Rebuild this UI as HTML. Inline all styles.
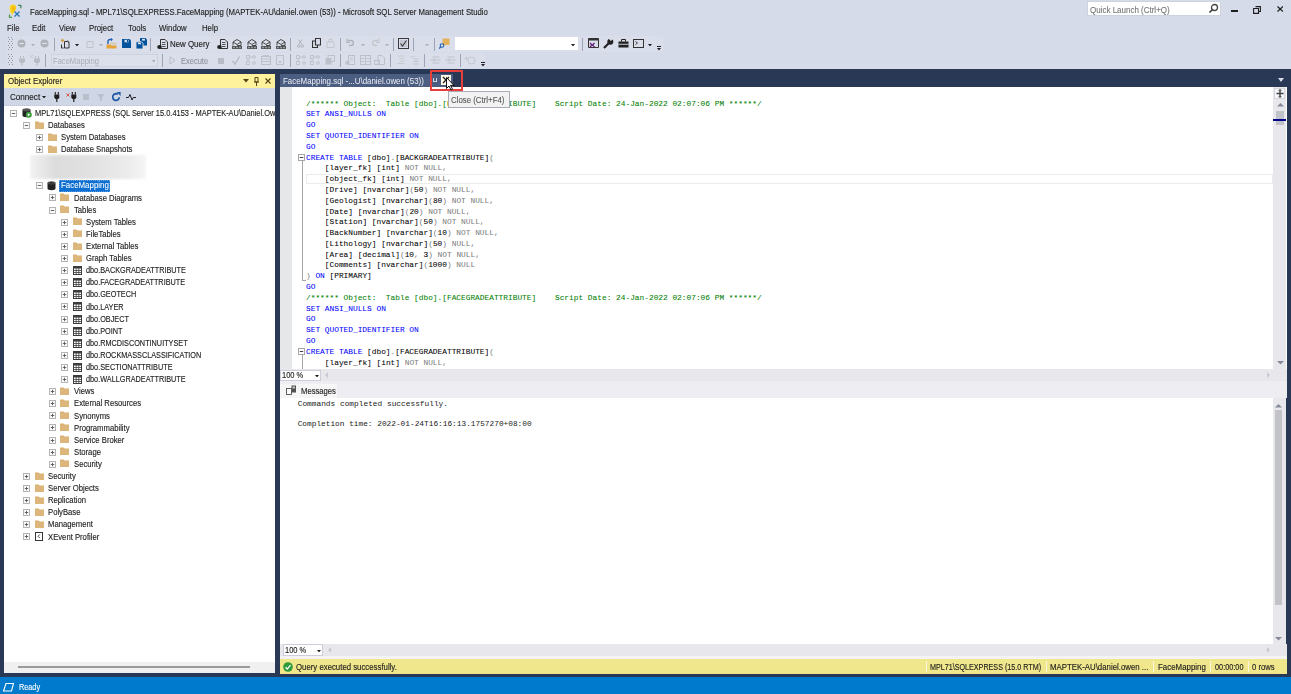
<!DOCTYPE html><html><head><meta charset='utf-8'><style>
*{margin:0;padding:0;box-sizing:border-box}
html,body{width:1291px;height:694px;overflow:hidden;background:#d6dbe9;font-family:"Liberation Sans",sans-serif;color:#1e1e1e}
.a{position:absolute}
.t{position:absolute;white-space:pre;line-height:1;transform-origin:0 0}
.mono{font-family:"Liberation Mono",monospace}
</style></head><body><svg class="a" style="left:8px;top:3px" width="15" height="16" viewBox="0 0 15 16"><defs><radialGradient id="yg" cx="0.6" cy="0.4" r="0.6"><stop offset="0" stop-color="#f5b400"/><stop offset="1" stop-color="#f8e040"/></radialGradient></defs><path d="M1.5 4.5c0-2 1.5-3 3.5-3s3.5 1 3.2 3.5c-0.3 2.5-2.5 5-4.2 7-1.5-2-2.5-4.5-2.5-7.5z" fill="url(#yg)"/><path d="M10 2.3h2.8v3" stroke="#3f8a5a" stroke-width="1.3" fill="none"/><path d="M1.5 11.5v2.8h2.5" stroke="#4d9a4d" stroke-width="1.3" fill="none"/><path d="M6.5 8.5l5 5M11.5 8.5l-5 5" stroke="#2d78b8" stroke-width="1.4"/></svg>
<div class="t" style="left:30.00px;top:9.06px;font-size:8.2px;color:#1e1e1e;transform:scaleX(0.9463);-webkit-text-stroke:0.13px #1e1e1e;">FaceMapping.sql - MPL71\SQLEXPRESS.FaceMapping (MAPTEK-AU\daniel.owen (53)) - Microsoft SQL Server Management Studio</div>
<div class="a" style="left:1087px;top:1px;width:134px;height:15px;background:#fff;border:1px solid #cdd2df"></div>
<div class="t" style="left:1090.00px;top:6.66px;font-size:8.2px;color:#767676;transform:scaleX(0.9756);-webkit-text-stroke:0.1px #767676;">Quick Launch (Ctrl+Q)</div>
<svg class="a" style="left:1208px;top:3px" width="11" height="11" viewBox="0 0 11 11"><circle cx="6.5" cy="4.5" r="3" stroke="#424242" stroke-width="1.3" fill="none"/><path d="M4.5 6.5L1.5 9.5" stroke="#424242" stroke-width="1.7"/></svg>
<div class="a" style="left:1231px;top:9.5px;width:7px;height:2px;background:#1e1e1e"></div>
<svg class="a" style="left:1253px;top:5.5px" width="8" height="8" viewBox="0 0 8 8"><path d="M2.5 0.6h4.9v4.9h-1.5" stroke="#1e1e1e" stroke-width="1.1" fill="none"/><path d="M0.6 2.5h4.9v4.9h-4.9z" stroke="#1e1e1e" stroke-width="1.1" fill="none"/></svg>
<svg class="a" style="left:1276.5px;top:6.3px" width="6.5" height="6" viewBox="0 0 6.5 6"><path d="M0.5 0.5l5.5 5M6 0.5l-5.5 5" stroke="#1e1e1e" stroke-width="1.2"/></svg>
<div class="t" style="left:7.00px;top:25.06px;font-size:8.2px;color:#1e1e1e;transform:scaleX(0.9512);-webkit-text-stroke:0.13px #1e1e1e;">File</div>
<div class="t" style="left:32.00px;top:25.06px;font-size:8.2px;color:#1e1e1e;transform:scaleX(0.9512);-webkit-text-stroke:0.13px #1e1e1e;">Edit</div>
<div class="t" style="left:59.00px;top:25.06px;font-size:8.2px;color:#1e1e1e;transform:scaleX(0.9512);-webkit-text-stroke:0.13px #1e1e1e;">View</div>
<div class="t" style="left:89.00px;top:25.06px;font-size:8.2px;color:#1e1e1e;transform:scaleX(0.9512);-webkit-text-stroke:0.13px #1e1e1e;">Project</div>
<div class="t" style="left:128.00px;top:25.06px;font-size:8.2px;color:#1e1e1e;transform:scaleX(0.9512);-webkit-text-stroke:0.13px #1e1e1e;">Tools</div>
<div class="t" style="left:159.00px;top:25.06px;font-size:8.2px;color:#1e1e1e;transform:scaleX(0.9512);-webkit-text-stroke:0.13px #1e1e1e;">Window</div>
<div class="t" style="left:202.00px;top:25.06px;font-size:8.2px;color:#1e1e1e;transform:scaleX(0.9512);-webkit-text-stroke:0.13px #1e1e1e;">Help</div>
<div class="a" style="left:7px;top:36px;width:656px;height:16px;background:#d9deea"></div>
<div class="a" style="left:7px;top:53px;width:478px;height:15px;background:#d9deea"></div>
<svg class="a" style="left:8px;top:37px" width="5" height="14" viewBox="0 0 5 14"><rect x="0" y="0" width="1" height="1" fill="#8e96a8"/><rect x="3" y="0" width="1" height="1" fill="#8e96a8"/><rect x="1" y="2" width="1" height="1" fill="#8e96a8"/><rect x="4" y="2" width="1" height="1" fill="#8e96a8"/><rect x="0" y="4" width="1" height="1" fill="#8e96a8"/><rect x="3" y="4" width="1" height="1" fill="#8e96a8"/><rect x="1" y="6" width="1" height="1" fill="#8e96a8"/><rect x="4" y="6" width="1" height="1" fill="#8e96a8"/><rect x="0" y="8" width="1" height="1" fill="#8e96a8"/><rect x="3" y="8" width="1" height="1" fill="#8e96a8"/><rect x="1" y="10" width="1" height="1" fill="#8e96a8"/><rect x="4" y="10" width="1" height="1" fill="#8e96a8"/><rect x="0" y="12" width="1" height="1" fill="#8e96a8"/><rect x="3" y="12" width="1" height="1" fill="#8e96a8"/></svg>
<svg class="a" style="left:17px;top:39px" width="9" height="9" viewBox="0 0 9 9"><circle cx="4.5" cy="4.5" r="4" fill="#aeb2ba"/><path d="M2.3 4.5h4.4" stroke="#e6e8ee" stroke-width="1"/></svg>
<svg class="a" style="left:31px;top:43.5px" width="4" height="2.5" viewBox="0 0 4 2.5"><path d="M0 0h4l-2.0 2.5z" fill="#aeb2ba"/></svg>
<svg class="a" style="left:40px;top:39px" width="9" height="9" viewBox="0 0 9 9"><circle cx="4.5" cy="4.5" r="4" fill="#aeb2ba"/><path d="M2.3 4.5h4.4" stroke="#e6e8ee" stroke-width="1"/></svg>
<div class="a" style="left:54px;top:37.5px;width:1px;height:13px;background:#9ca4b6"></div>
<svg class="a" style="left:60px;top:38px" width="10" height="11" viewBox="0 0 10 11"><path d="M2.5 0.8v3.4M0.8 2.5h3.4" stroke="#c9a24a" stroke-width="1.3"/><path d="M4.5 3.5h3.2l1.3 1.3v5.2h-4.5z" stroke="#333" stroke-width="1" fill="none"/><path d="M7 2.5h0.8l1.7 1.7v0.8z" fill="#333"/><path d="M1.5 6.5v3.5h2" stroke="#333" stroke-width="1" fill="none"/></svg>
<svg class="a" style="left:75px;top:43.5px" width="4" height="2.5" viewBox="0 0 4 2.5"><path d="M0 0h4l-2.0 2.5z" fill="#1e1e1e"/></svg>
<svg class="a" style="left:86px;top:40px" width="8" height="8" viewBox="0 0 8 8"><path d="M1 1.5h6v6h-6z" stroke="#c0c3ca" stroke-width="1" fill="none"/></svg>
<svg class="a" style="left:99px;top:43.5px" width="4" height="2.5" viewBox="0 0 4 2.5"><path d="M0 0h4l-2.0 2.5z" fill="#aeb2ba"/></svg>
<svg class="a" style="left:106px;top:38px" width="11" height="11" viewBox="0 0 11 11"><path d="M0.5 6.5h4l1 1h5v3h-10z" fill="#e8a33a"/><path d="M4 6.5h6.5v-2h-6z" fill="#d4bf90" opacity="0.6"/><path d="M2 6v-2.5a2 2 0 0 1 2-2h1.5" stroke="#1f5fae" stroke-width="1.4" fill="none"/><path d="M5 0l2 1.5-2 1.8z" fill="#1f5fae"/></svg>
<svg class="a" style="left:122px;top:39px" width="9" height="9" viewBox="0 0 9 9"><path d="M0 0h7.5l1.5 1.5v7.5h-9z" fill="#00539c"/><rect x="2.5" y="0.8" width="4" height="2.5" fill="#d6dbe9"/><rect x="5" y="1" width="1" height="2" fill="#00539c"/></svg>
<svg class="a" style="left:136px;top:38px" width="11" height="11" viewBox="0 0 11 11"><path d="M4 0h5.5l1.5 1.5v6h-7z" fill="#00539c"/><rect x="6" y="0.8" width="3" height="1.8" fill="#d6dbe9"/><path d="M0 3.8h5.5l1.5 1.5v5.7h-7z" fill="#00539c" stroke="#d9deea" stroke-width="0.9"/><rect x="2" y="4.5" width="3" height="1.8" fill="#d6dbe9"/></svg>
<div class="a" style="left:150px;top:37.5px;width:1px;height:13px;background:#9ca4b6"></div>
<svg class="a" style="left:157px;top:38.5px" width="11" height="10" viewBox="0 0 11 10"><path d="M3.5 0.5h4.5l2.5 2.5v6.5h-7z" stroke="#333" stroke-width="1" fill="none"/><path d="M5 3.5h3.5M5 5.5h3.5M5 7.5h3.5" stroke="#333" stroke-width="0.8"/><ellipse cx="2.5" cy="8" rx="2.3" ry="1.9" fill="#222"/></svg>
<div class="t" style="left:169.50px;top:41.26px;font-size:8.2px;color:#1e1e1e;transform:scaleX(0.9634);-webkit-text-stroke:0.13px #1e1e1e;">New Query</div>
<svg class="a" style="left:217px;top:38.5px" width="11" height="10" viewBox="0 0 11 10"><path d="M3.5 0.5h4.5l2.5 2.5v6.5h-7z" stroke="#333" stroke-width="1" fill="none"/><path d="M5 3.5h3.5M5 5.5h3.5M5 7.5h3.5" stroke="#333" stroke-width="0.8"/><ellipse cx="2.5" cy="8" rx="2.3" ry="1.9" fill="#222"/></svg>
<svg class="a" style="left:232px;top:38.5px" width="10" height="10" viewBox="0 0 10 10"><path d="M1 3l4-2.5 4 2.5v3.5l-4 0" stroke="#3a3a3a" stroke-width="0.9" fill="none"/><path d="M1 3l4 2.5 4-2.5M1 3v3.5" stroke="#3a3a3a" stroke-width="0.9" fill="none"/><path d="M0.5 7.2v2.6M2 7.2v2.6M3.5 7.2v2.6M5 7.2v2.6M6.5 7.2v2.6M8 7.2v2.6M9.5 7.2v2.6" stroke="#444" stroke-width="0.9"/><path d="M0.5 7.5h9.5M0.5 9.5h9.5" stroke="#444" stroke-width="0.7"/></svg>
<svg class="a" style="left:247px;top:38.5px" width="10" height="10" viewBox="0 0 10 10"><path d="M1 3l4-2.5 4 2.5v3.5l-4 0" stroke="#3a3a3a" stroke-width="0.9" fill="none"/><path d="M1 3l4 2.5 4-2.5M1 3v3.5" stroke="#3a3a3a" stroke-width="0.9" fill="none"/><path d="M0.5 7.2v2.6M2 7.2v2.6M3.5 7.2v2.6M5 7.2v2.6M6.5 7.2v2.6M8 7.2v2.6M9.5 7.2v2.6" stroke="#444" stroke-width="0.9"/><path d="M0.5 7.5h9.5M0.5 9.5h9.5" stroke="#444" stroke-width="0.7"/></svg>
<svg class="a" style="left:261px;top:38.5px" width="10" height="10" viewBox="0 0 10 10"><path d="M1 3l4-2.5 4 2.5v3.5l-4 0" stroke="#3a3a3a" stroke-width="0.9" fill="none"/><path d="M1 3l4 2.5 4-2.5M1 3v3.5" stroke="#3a3a3a" stroke-width="0.9" fill="none"/><path d="M0.5 7.2v2.6M2 7.2v2.6M3.5 7.2v2.6M5 7.2v2.6M6.5 7.2v2.6M8 7.2v2.6M9.5 7.2v2.6" stroke="#444" stroke-width="0.9"/><path d="M0.5 7.5h9.5M0.5 9.5h9.5" stroke="#444" stroke-width="0.7"/></svg>
<svg class="a" style="left:276px;top:38.5px" width="10" height="10" viewBox="0 0 10 10"><path d="M1 3l4-2.5 4 2.5v3.5l-4 0" stroke="#3a3a3a" stroke-width="0.9" fill="none"/><path d="M1 3l4 2.5 4-2.5M1 3v3.5" stroke="#3a3a3a" stroke-width="0.9" fill="none"/><path d="M0.5 7.2v2.6M2 7.2v2.6M3.5 7.2v2.6M5 7.2v2.6M6.5 7.2v2.6M8 7.2v2.6M9.5 7.2v2.6" stroke="#444" stroke-width="0.9"/><path d="M0.5 7.5h9.5M0.5 9.5h9.5" stroke="#444" stroke-width="0.7"/></svg>
<div class="a" style="left:290px;top:37.5px;width:1px;height:13px;background:#9ca4b6"></div>
<svg class="a" style="left:297px;top:39px" width="7" height="9" viewBox="0 0 7 9"><path d="M1.5 0.5l3.5 5M5 0.5l-3.5 5" stroke="#aeb2ba" stroke-width="1"/><circle cx="1.8" cy="7" r="1.3" stroke="#aeb2ba" fill="none" stroke-width="0.9"/><circle cx="5.2" cy="7" r="1.3" stroke="#aeb2ba" fill="none" stroke-width="0.9"/></svg>
<svg class="a" style="left:312px;top:38px" width="9" height="10" viewBox="0 0 9 10"><path d="M3.5 0.5h5v6.5h-5z" stroke="#333" stroke-width="1.1" fill="none"/><path d="M3.5 3h-3v6.5h5v-2.5" stroke="#333" stroke-width="1.1" fill="none"/></svg>
<svg class="a" style="left:326px;top:38px" width="9" height="10" viewBox="0 0 9 10"><path d="M1 4h7v5.5h-7z" stroke="#c3c6cd" stroke-width="1" fill="none"/><path d="M3 4v-2.5h3v2.5" stroke="#c3c6cd" stroke-width="1" fill="none"/></svg>
<div class="a" style="left:340px;top:37.5px;width:1px;height:13px;background:#9ca4b6"></div>
<svg class="a" style="left:346px;top:38px" width="8" height="10" viewBox="0 0 8 10"><path d="M2 2.5h3a2.5 2.5 0 0 1 0 5h-2" stroke="#aeb2ba" stroke-width="1.4" fill="none"/><path d="M1 0.5v4h3" stroke="#aeb2ba" stroke-width="1.2" fill="none"/></svg>
<svg class="a" style="left:361px;top:43.5px" width="4" height="2.5" viewBox="0 0 4 2.5"><path d="M0 0h4l-2.0 2.5z" fill="#aeb2ba"/></svg>
<svg class="a" style="left:372px;top:38px" width="8" height="10" viewBox="0 0 8 10"><path d="M6 2.5h-3a2.5 2.5 0 0 0 0 5h2" stroke="#c3c6cd" stroke-width="1.4" fill="none"/><path d="M7 0.5v4h-3" stroke="#c3c6cd" stroke-width="1.2" fill="none"/></svg>
<svg class="a" style="left:385px;top:43.5px" width="4" height="2.5" viewBox="0 0 4 2.5"><path d="M0 0h4l-2.0 2.5z" fill="#aeb2ba"/></svg>
<div class="a" style="left:393px;top:37.5px;width:1px;height:13px;background:#9ca4b6"></div>
<svg class="a" style="left:398px;top:38px" width="11" height="11" viewBox="0 0 11 11"><rect x="0.5" y="0.5" width="10" height="10" stroke="#3a3a3a" stroke-width="1" fill="none"/><rect x="2" y="2" width="7" height="7" fill="#c3c7cf"/><path d="M2.5 5.5l2 2.5 4-5.5" stroke="#3a3a3a" stroke-width="1.1" fill="none"/></svg>
<div class="a" style="left:413px;top:37.5px;width:1px;height:13px;background:#9ca4b6"></div>
<svg class="a" style="left:425px;top:43.5px" width="4" height="2.5" viewBox="0 0 4 2.5"><path d="M0 0h4l-2.0 2.5z" fill="#aeb2ba"/></svg>
<div class="a" style="left:434px;top:37.5px;width:1px;height:13px;background:#9ca4b6"></div>
<svg class="a" style="left:439px;top:38px" width="11" height="11" viewBox="0 0 11 11"><rect x="3.5" y="0.5" width="7" height="6.5" fill="#e3b25b"/><circle cx="3" cy="7.5" r="1.8" stroke="#1f5fae" stroke-width="1.1" fill="none"/><path d="M1.7 8.8l-1.5 1.8" stroke="#1f5fae" stroke-width="1.3"/></svg>
<div class="a" style="left:454.5px;top:36.7px;width:123px;height:13.4px;background:#fff"></div>
<svg class="a" style="left:571px;top:43.5px" width="4" height="2.5" viewBox="0 0 4 2.5"><path d="M0 0h4l-2.0 2.5z" fill="#1e1e1e"/></svg>
<div class="a" style="left:582px;top:37.5px;width:1px;height:13px;background:#9ca4b6"></div>
<svg class="a" style="left:588px;top:38px" width="11" height="11" viewBox="0 0 11 11"><path d="M0.5 0.5h10v9h-10z" stroke="#333" stroke-width="1" fill="none"/><rect x="0.5" y="0.5" width="10" height="2" fill="#333"/><path d="M2 5l2 2-2 2M6.5 5l-2 2 2 2" stroke="#68217a" stroke-width="1.3" fill="none"/></svg>
<svg class="a" style="left:603px;top:38px" width="11" height="11" viewBox="0 0 11 11"><path d="M1 10l5-5" stroke="#222" stroke-width="2.2"/><circle cx="7.3" cy="3.7" r="3" fill="#222"/><rect x="6.8" y="-0.5" width="2.6" height="3" fill="#d9deea" transform="rotate(45 8 1)"/></svg>
<svg class="a" style="left:618px;top:38px" width="11" height="11" viewBox="0 0 11 11"><rect x="0.5" y="3.5" width="10" height="6" fill="#222"/><path d="M3.5 3.5v-2h4v2" stroke="#222" stroke-width="1" fill="none"/><rect x="0.5" y="5.8" width="10" height="0.9" fill="#d9deea"/></svg>
<svg class="a" style="left:633px;top:38px" width="11" height="11" viewBox="0 0 11 11"><rect x="0.5" y="1.5" width="10" height="8" stroke="#333" stroke-width="1" fill="none"/><path d="M2.5 3.5l2 1.5-2 1.5" stroke="#333" stroke-width="0.9" fill="none"/></svg>
<svg class="a" style="left:648px;top:43.5px" width="4" height="2.5" viewBox="0 0 4 2.5"><path d="M0 0h4l-2.0 2.5z" fill="#1e1e1e"/></svg>
<svg class="a" style="left:657px;top:45.5px" width="4" height="5" viewBox="0 0 4 5"><rect x="0" y="0" width="4" height="1" fill="#1e1e1e"/><path d="M0 2h4l-2 2.5z" fill="#1e1e1e"/></svg>
<svg class="a" style="left:8px;top:53.5px" width="5" height="13" viewBox="0 0 5 13"><rect x="0" y="0" width="1" height="1" fill="#8e96a8"/><rect x="3" y="0" width="1" height="1" fill="#8e96a8"/><rect x="1" y="2" width="1" height="1" fill="#8e96a8"/><rect x="4" y="2" width="1" height="1" fill="#8e96a8"/><rect x="0" y="4" width="1" height="1" fill="#8e96a8"/><rect x="3" y="4" width="1" height="1" fill="#8e96a8"/><rect x="1" y="6" width="1" height="1" fill="#8e96a8"/><rect x="4" y="6" width="1" height="1" fill="#8e96a8"/><rect x="0" y="8" width="1" height="1" fill="#8e96a8"/><rect x="3" y="8" width="1" height="1" fill="#8e96a8"/><rect x="1" y="10" width="1" height="1" fill="#8e96a8"/><rect x="4" y="10" width="1" height="1" fill="#8e96a8"/></svg>
<svg class="a" style="left:18.5px;top:55.5px" width="6" height="10" viewBox="0 0 6 10"><path d="M1.5 0v2.5M4.5 0v2.5" stroke="#b8bcc5" stroke-width="1"/><path d="M0 2.5h6v3l-1.5 1.5h-3l-1.5-1.5z" fill="#b8bcc5"/><path d="M3 7v3" stroke="#b8bcc5" stroke-width="1.1"/></svg>
<svg class="a" style="left:30px;top:55px" width="3" height="3" viewBox="0 0 3 3"><path d="M0 0l3 3M3 0l-3 3" stroke="#c0c3ca" stroke-width="0.8"/></svg>
<svg class="a" style="left:33.5px;top:55.5px" width="6" height="10" viewBox="0 0 6 10"><path d="M1.5 0v2.5M4.5 0v2.5" stroke="#b8bcc5" stroke-width="1"/><path d="M0 2.5h6v3l-1.5 1.5h-3l-1.5-1.5z" fill="#b8bcc5"/><path d="M3 7v3" stroke="#b8bcc5" stroke-width="1.1"/></svg>
<div class="a" style="left:45px;top:54px;width:1px;height:13px;background:#9ca4b6"></div>
<div class="a" style="left:50.5px;top:54px;width:107px;height:13px;background:#dce0eb;border:1px solid #cdd2de"></div>
<div class="t" style="left:53.00px;top:57.86px;font-size:8.2px;color:#abafb9;transform:scaleX(0.9268);-webkit-text-stroke:0.05px #abafb9;">FaceMapping</div>
<svg class="a" style="left:151.5px;top:60px" width="3.5" height="2.5" viewBox="0 0 3.5 2.5"><path d="M0 0h3.5l-1.75 2.5z" fill="#a9adb8"/></svg>
<div class="a" style="left:162px;top:54px;width:1px;height:13px;background:#9ca4b6"></div>
<svg class="a" style="left:169px;top:55.5px" width="7" height="9" viewBox="0 0 7 9"><path d="M1 0.8l5 3.7-5 3.7z" stroke="#b8bcc5" stroke-width="1" fill="none"/></svg>
<div class="t" style="left:181.00px;top:57.56px;font-size:8.2px;color:#8e929c;transform:scaleX(0.9146);-webkit-text-stroke:0.1px #8e929c;">Execute</div>
<div class="a" style="left:218px;top:57.5px;width:6px;height:6px;background:#b8bcc5"></div>
<svg class="a" style="left:232px;top:55.5px" width="8" height="9" viewBox="0 0 8 9"><path d="M0.5 5l2.5 3 4.5-7.5" stroke="#b8bcc5" stroke-width="1.4" fill="none"/></svg>
<svg class="a" style="left:246px;top:55px" width="10" height="10" viewBox="0 0 10 10"><rect x="0.5" y="0.5" width="3" height="3" stroke="#bcc0c9" fill="none" stroke-width="0.9"/><rect x="0.5" y="6.5" width="3" height="3" stroke="#bcc0c9" fill="none" stroke-width="0.9"/><path d="M2 3.5v3M3.5 2h3" stroke="#bcc0c9" stroke-width="0.9"/><ellipse cx="8" cy="2" rx="1.5" ry="1.2" stroke="#bcc0c9" fill="none" stroke-width="0.9"/><ellipse cx="8" cy="8" rx="1.5" ry="1.2" stroke="#bcc0c9" fill="none" stroke-width="0.9"/></svg>
<svg class="a" style="left:261px;top:55px" width="10" height="10" viewBox="0 0 10 10"><rect x="0.5" y="1.5" width="9" height="8" stroke="#bcc0c9" fill="none" stroke-width="1"/><path d="M0.5 4h9M0.5 6.5h9M2 0.5h6" stroke="#bcc0c9" stroke-width="0.9"/></svg>
<svg class="a" style="left:276px;top:55px" width="8" height="10" viewBox="0 0 8 10"><rect x="0.5" y="0.5" width="7" height="9" stroke="#bcc0c9" fill="none" stroke-width="1"/><rect x="3" y="6" width="2" height="2" fill="#bcc0c9"/></svg>
<div class="a" style="left:290px;top:54px;width:1px;height:13px;background:#9ca4b6"></div>
<svg class="a" style="left:296px;top:55px" width="10" height="10" viewBox="0 0 10 10"><rect x="0.5" y="0.5" width="3" height="3" stroke="#bcc0c9" fill="none" stroke-width="0.9"/><rect x="0.5" y="6.5" width="3" height="3" stroke="#bcc0c9" fill="none" stroke-width="0.9"/><path d="M2 3.5v3M3.5 2h3" stroke="#bcc0c9" stroke-width="0.9"/><ellipse cx="8" cy="2" rx="1.5" ry="1.2" stroke="#bcc0c9" fill="none" stroke-width="0.9"/><ellipse cx="8" cy="8" rx="1.5" ry="1.2" stroke="#bcc0c9" fill="none" stroke-width="0.9"/></svg>
<svg class="a" style="left:310px;top:55px" width="10" height="10" viewBox="0 0 10 10"><rect x="0.5" y="0.5" width="3" height="3" stroke="#bcc0c9" fill="none" stroke-width="0.9"/><rect x="0.5" y="6.5" width="3" height="3" stroke="#bcc0c9" fill="none" stroke-width="0.9"/><path d="M2 3.5v3M3.5 2h3" stroke="#bcc0c9" stroke-width="0.9"/><ellipse cx="8" cy="2" rx="1.5" ry="1.2" stroke="#bcc0c9" fill="none" stroke-width="0.9"/><ellipse cx="8" cy="8" rx="1.5" ry="1.2" stroke="#bcc0c9" fill="none" stroke-width="0.9"/></svg>
<svg class="a" style="left:325px;top:55px" width="10" height="10" viewBox="0 0 10 10"><rect x="3" y="0.5" width="6.5" height="6" stroke="#bcc0c9" fill="none" stroke-width="1"/><rect x="0.5" y="3" width="6" height="6.5" fill="#bcc0c9"/></svg>
<div class="a" style="left:340px;top:54px;width:1px;height:13px;background:#9ca4b6"></div>
<svg class="a" style="left:345px;top:55px" width="10" height="10" viewBox="0 0 10 10"><rect x="3.5" y="0.5" width="6" height="9" stroke="#bcc0c9" fill="none" stroke-width="1"/><rect x="0.5" y="6" width="4" height="3.5" fill="#bcc0c9"/><path d="M5 3h3M5 5h3" stroke="#bcc0c9" stroke-width="0.8"/></svg>
<svg class="a" style="left:360px;top:55px" width="11" height="10" viewBox="0 0 11 10"><rect x="0.5" y="0.5" width="10" height="9" stroke="#bcc0c9" fill="none" stroke-width="1"/><path d="M0.5 3.5h10M5.5 0.5v9M0.5 6.5h10" stroke="#bcc0c9" stroke-width="0.8"/></svg>
<svg class="a" style="left:374px;top:55px" width="11" height="10" viewBox="0 0 11 10"><path d="M4 0.5h4l2.5 2.5v6.5h-6.5z" stroke="#bcc0c9" fill="none" stroke-width="1"/><rect x="0.5" y="5.5" width="5" height="4" stroke="#bcc0c9" fill="none" stroke-width="1"/></svg>
<div class="a" style="left:390px;top:54px;width:1px;height:13px;background:#9ca4b6"></div>
<svg class="a" style="left:397px;top:55px" width="8" height="10" viewBox="0 0 8 10"><path d="M0.5 1h7M2.5 3.5h5M2.5 6h5M0.5 8.5h7" stroke="#c3c6cd" stroke-width="0.9"/></svg>
<svg class="a" style="left:410px;top:55px" width="9" height="10" viewBox="0 0 9 10"><path d="M0.5 1l2 2 2-2M3.5 4h5M3.5 6.5h5M3.5 9h5" stroke="#bcc0c9" stroke-width="0.9" fill="none"/></svg>
<div class="a" style="left:424px;top:54px;width:1px;height:13px;background:#9ca4b6"></div>
<svg class="a" style="left:430px;top:55px" width="11" height="10" viewBox="0 0 11 10"><path d="M0.5 5h10M2.5 2h7M2.5 8h7M5 3.5l-2 1.5 2 1.5" stroke="#bcc0c9" stroke-width="0.9" fill="none"/></svg>
<svg class="a" style="left:445px;top:55px" width="11" height="10" viewBox="0 0 11 10"><path d="M0.5 5h10M2.5 2h7M2.5 8h7M5 3.5l-2 1.5 2 1.5" stroke="#bcc0c9" stroke-width="0.9" fill="none"/></svg>
<div class="a" style="left:460px;top:54px;width:1px;height:13px;background:#9ca4b6"></div>
<svg class="a" style="left:464px;top:55px" width="12" height="10" viewBox="0 0 12 10"><circle cx="7.5" cy="5.5" r="3.5" stroke="#c3c6cd" stroke-width="1" fill="none"/><path d="M0.5 3.5h4M2.5 1.5v4" stroke="#c3c6cd" stroke-width="0.9"/></svg>
<svg class="a" style="left:481px;top:61.5px" width="4" height="5" viewBox="0 0 4 5"><rect x="0" y="0" width="4" height="1" fill="#1e1e1e"/><path d="M0 2h4l-2 2.5z" fill="#1e1e1e"/></svg>
<div class="a" style="left:0px;top:69px;width:1291px;height:608px;background:#293955"></div>
<div class="a" style="left:4px;top:73.7px;width:271px;height:14.3px;background:#fff29d"></div>
<div class="t" style="left:8.00px;top:78.06px;font-size:8.2px;color:#1e1e1e;transform:scaleX(0.9622);-webkit-text-stroke:0.13px #1e1e1e;">Object Explorer</div>
<svg class="a" style="left:243px;top:78.5px" width="6" height="4" viewBox="0 0 6 4"><path d="M0 0h6l-3 3.5z" fill="#534717"/></svg>
<svg class="a" style="left:254px;top:77px" width="5" height="9" viewBox="0 0 5 9"><path d="M1 0.5h3v4.5h-3z" stroke="#534717" stroke-width="1" fill="none"/><path d="M0 5h5M2.5 5v4" stroke="#534717" stroke-width="1"/></svg>
<svg class="a" style="left:265px;top:78px" width="6" height="6" viewBox="0 0 6 6"><path d="M0.5 0.5l5 5M5.5 0.5l-5 5" stroke="#534717" stroke-width="1.2"/></svg>
<div class="a" style="left:4px;top:88px;width:271px;height:17.5px;background:#cfd6e5"></div>
<div class="t" style="left:10.00px;top:94.06px;font-size:8.2px;color:#1e1e1e;transform:scaleX(0.9878);-webkit-text-stroke:0.13px #1e1e1e;">Connect</div>
<svg class="a" style="left:41.5px;top:95.5px" width="4" height="2.5" viewBox="0 0 4 2.5"><path d="M0 0h4l-2 2.5z" fill="#1e1e1e"/></svg>
<svg class="a" style="left:53.8px;top:92.2px" width="6" height="10" viewBox="0 0 6 10"><path d="M1.3 0v2.5M4.3 0v2.5" stroke="#1e1e1e" stroke-width="1.1"/><path d="M0.3 2.5h5v3.2l-1.2 1.2h-2.6l-1.2-1.2z" fill="#1e1e1e"/><path d="M2.8 6.5v3.5" stroke="#1e1e1e" stroke-width="1.2"/></svg>
<svg class="a" style="left:66px;top:92.5px" width="4" height="4" viewBox="0 0 4 4"><path d="M0.5 0.5l3 3M3.5 0.5l-3 3" stroke="#e0463a" stroke-width="0.9"/></svg>
<svg class="a" style="left:70.5px;top:92.2px" width="6" height="10" viewBox="0 0 6 10"><path d="M1.3 0v2.5M4.3 0v2.5" stroke="#1e1e1e" stroke-width="1.1"/><path d="M0.3 2.5h5v3.2l-1.2 1.2h-2.6l-1.2-1.2z" fill="#1e1e1e"/><path d="M2.8 6.5v3.5" stroke="#1e1e1e" stroke-width="1.2"/></svg>
<div class="a" style="left:83px;top:94px;width:6px;height:5.5px;background:#b9bfcb"></div>
<svg class="a" style="left:97px;top:93.5px" width="7.5" height="7.5" viewBox="0 0 7.5 7.5"><path d="M0 0h7.5l-2.7 3.5v4l-2-1.2v-2.8z" fill="#b9bfcb"/></svg>
<svg class="a" style="left:111.5px;top:92.3px" width="9" height="9.5" viewBox="0 0 9 9.5"><path d="M7.3 5.3a3.3 3.3 0 1 1-1.5-3" stroke="#1e5aa8" stroke-width="1.8" fill="none"/><path d="M4.6 0h4v4z" fill="#1e5aa8"/></svg>
<svg class="a" style="left:125.5px;top:93.5px" width="10" height="6.5" viewBox="0 0 10 6.5"><path d="M0 3.5h2.5l1.5-3 2 5.5 1.2-2.5h2.8" stroke="#1e1e1e" stroke-width="1" fill="none"/></svg>
<div class="a" style="left:4px;top:105.5px;width:271px;height:557px;background:#fff"></div>
<div class="a" style="left:4px;top:105px;width:271px;height:1px;background:repeating-linear-gradient(90deg,#bfc6d4 0 1px,transparent 1px 2px)"></div>
<div class="a" style="left:4px;top:662px;width:271px;height:11px;background:#f0f0f0"></div>
<div class="a" style="left:17.5px;top:666px;width:232.5px;height:2px;background:#9a9a9a"></div>
<div class="a" style="left:4px;top:105.5px;width:271px;height:556.5px;overflow:hidden">
<svg class="a" style="left:6.20px;top:4.20px" width="7" height="7" viewBox="0 0 7 7"><rect x="0.5" y="0.5" width="6" height="6" stroke="#b4b4b4" stroke-width="1" fill="#fafafa"/><path d="M1.8 3.5h3.4" stroke="#555" stroke-width="0.9"/></svg>
<svg class="a" style="left:17.50px;top:2.30px" width="10" height="10" viewBox="0 0 10 10"><path d="M0.5 1.8v5.8c0 1 1.8 1.7 4 1.7s4-0.7 4-1.7v-5.8z" fill="#222"/><ellipse cx="4.5" cy="1.8" rx="4" ry="1.6" fill="#555"/><circle cx="6.8" cy="6.8" r="3" fill="#3a9b3a"/><path d="M5.8 5.3v3l2.5-1.5z" fill="#fff"/></svg>
<div class="t" style="left:31.40px;top:4.36px;font-size:8.2px;color:#1e1e1e;transform:scaleX(0.9085);-webkit-text-stroke:0.13px #1e1e1e;">MPL71\SQLEXPRESS (SQL Server 15.0.4153 - MAPTEK-AU\Daniel.Owen)</div>
<svg class="a" style="left:19.00px;top:16.31px" width="7" height="7" viewBox="0 0 7 7"><rect x="0.5" y="0.5" width="6" height="6" stroke="#b4b4b4" stroke-width="1" fill="#fafafa"/><path d="M1.8 3.5h3.4" stroke="#555" stroke-width="0.9"/></svg>
<svg class="a" style="left:30.80px;top:15.01px" width="9" height="8" viewBox="0 0 9 8"><path d="M0 0.5h3.5l1 1h4.5v6.5h-9z" fill="#d9b271"/><rect x="0" y="2" width="9" height="6" fill="#dcb67a"/></svg>
<div class="t" style="left:43.90px;top:16.46px;font-size:8.2px;color:#1e1e1e;transform:scaleX(0.9390);-webkit-text-stroke:0.13px #1e1e1e;">Databases</div>
<svg class="a" style="left:31.80px;top:28.41px" width="7" height="7" viewBox="0 0 7 7"><rect x="0.5" y="0.5" width="6" height="6" stroke="#b4b4b4" stroke-width="1" fill="#fafafa"/><path d="M1.8 3.5h3.4" stroke="#555" stroke-width="0.9"/><path d="M3.5 1.8v3.4" stroke="#555" stroke-width="0.9"/></svg>
<svg class="a" style="left:43.60px;top:27.11px" width="9" height="8" viewBox="0 0 9 8"><path d="M0 0.5h3.5l1 1h4.5v6.5h-9z" fill="#d9b271"/><rect x="0" y="2" width="9" height="6" fill="#dcb67a"/></svg>
<div class="t" style="left:56.70px;top:28.57px;font-size:8.2px;color:#1e1e1e;transform:scaleX(0.9390);-webkit-text-stroke:0.13px #1e1e1e;">System Databases</div>
<svg class="a" style="left:31.80px;top:40.52px" width="7" height="7" viewBox="0 0 7 7"><rect x="0.5" y="0.5" width="6" height="6" stroke="#b4b4b4" stroke-width="1" fill="#fafafa"/><path d="M1.8 3.5h3.4" stroke="#555" stroke-width="0.9"/><path d="M3.5 1.8v3.4" stroke="#555" stroke-width="0.9"/></svg>
<svg class="a" style="left:43.60px;top:39.22px" width="9" height="8" viewBox="0 0 9 8"><path d="M0 0.5h3.5l1 1h4.5v6.5h-9z" fill="#d9b271"/><rect x="0" y="2" width="9" height="6" fill="#dcb67a"/></svg>
<div class="t" style="left:56.70px;top:40.68px;font-size:8.2px;color:#1e1e1e;transform:scaleX(0.9390);-webkit-text-stroke:0.13px #1e1e1e;">Database Snapshots</div>
<svg class="a" style="left:31.80px;top:76.84px" width="7" height="7" viewBox="0 0 7 7"><rect x="0.5" y="0.5" width="6" height="6" stroke="#b4b4b4" stroke-width="1" fill="#fafafa"/><path d="M1.8 3.5h3.4" stroke="#555" stroke-width="0.9"/></svg>
<svg class="a" style="left:43.30px;top:75.64px" width="9" height="9.5" viewBox="0 0 9 9.5"><path d="M0.5 1.8v5.8c0 1 1.8 1.7 4 1.7s4-0.7 4-1.7v-5.8z" fill="#222"/><ellipse cx="4.5" cy="1.8" rx="4" ry="1.6" fill="#555"/><ellipse cx="4.5" cy="1.8" rx="3" ry="0.9" fill="#333"/></svg>
<div class="a" style="left:55.30px;top:74.30px;width:50.7px;height:12px;background:#0d6fd1;outline:1px dotted #5c9be0;outline-offset:-1px"></div>
<div class="t" style="left:56.70px;top:76.99px;font-size:8.2px;color:#fff;transform:scaleX(0.9634);-webkit-text-stroke:0.05px #fff;">FaceMapping</div>
<svg class="a" style="left:44.60px;top:88.94px" width="7" height="7" viewBox="0 0 7 7"><rect x="0.5" y="0.5" width="6" height="6" stroke="#b4b4b4" stroke-width="1" fill="#fafafa"/><path d="M1.8 3.5h3.4" stroke="#555" stroke-width="0.9"/><path d="M3.5 1.8v3.4" stroke="#555" stroke-width="0.9"/></svg>
<svg class="a" style="left:56.40px;top:87.64px" width="9" height="8" viewBox="0 0 9 8"><path d="M0 0.5h3.5l1 1h4.5v6.5h-9z" fill="#d9b271"/><rect x="0" y="2" width="9" height="6" fill="#dcb67a"/></svg>
<div class="t" style="left:69.50px;top:89.10px;font-size:8.2px;color:#1e1e1e;transform:scaleX(0.9390);-webkit-text-stroke:0.13px #1e1e1e;">Database Diagrams</div>
<svg class="a" style="left:44.60px;top:101.05px" width="7" height="7" viewBox="0 0 7 7"><rect x="0.5" y="0.5" width="6" height="6" stroke="#b4b4b4" stroke-width="1" fill="#fafafa"/><path d="M1.8 3.5h3.4" stroke="#555" stroke-width="0.9"/></svg>
<svg class="a" style="left:56.40px;top:99.75px" width="9" height="8" viewBox="0 0 9 8"><path d="M0 0.5h3.5l1 1h4.5v6.5h-9z" fill="#d9b271"/><rect x="0" y="2" width="9" height="6" fill="#dcb67a"/></svg>
<div class="t" style="left:69.50px;top:101.21px;font-size:8.2px;color:#1e1e1e;transform:scaleX(0.9390);-webkit-text-stroke:0.13px #1e1e1e;">Tables</div>
<svg class="a" style="left:57.40px;top:113.15px" width="7" height="7" viewBox="0 0 7 7"><rect x="0.5" y="0.5" width="6" height="6" stroke="#b4b4b4" stroke-width="1" fill="#fafafa"/><path d="M1.8 3.5h3.4" stroke="#555" stroke-width="0.9"/><path d="M3.5 1.8v3.4" stroke="#555" stroke-width="0.9"/></svg>
<svg class="a" style="left:69.20px;top:111.85px" width="9" height="8" viewBox="0 0 9 8"><path d="M0 0.5h3.5l1 1h4.5v6.5h-9z" fill="#d9b271"/><rect x="0" y="2" width="9" height="6" fill="#dcb67a"/></svg>
<div class="t" style="left:82.30px;top:113.31px;font-size:8.2px;color:#1e1e1e;transform:scaleX(0.9390);-webkit-text-stroke:0.13px #1e1e1e;">System Tables</div>
<svg class="a" style="left:57.40px;top:125.26px" width="7" height="7" viewBox="0 0 7 7"><rect x="0.5" y="0.5" width="6" height="6" stroke="#b4b4b4" stroke-width="1" fill="#fafafa"/><path d="M1.8 3.5h3.4" stroke="#555" stroke-width="0.9"/><path d="M3.5 1.8v3.4" stroke="#555" stroke-width="0.9"/></svg>
<svg class="a" style="left:69.20px;top:123.96px" width="9" height="8" viewBox="0 0 9 8"><path d="M0 0.5h3.5l1 1h4.5v6.5h-9z" fill="#d9b271"/><rect x="0" y="2" width="9" height="6" fill="#dcb67a"/></svg>
<div class="t" style="left:82.30px;top:125.42px;font-size:8.2px;color:#1e1e1e;transform:scaleX(0.9390);-webkit-text-stroke:0.13px #1e1e1e;">FileTables</div>
<svg class="a" style="left:57.40px;top:137.37px" width="7" height="7" viewBox="0 0 7 7"><rect x="0.5" y="0.5" width="6" height="6" stroke="#b4b4b4" stroke-width="1" fill="#fafafa"/><path d="M1.8 3.5h3.4" stroke="#555" stroke-width="0.9"/><path d="M3.5 1.8v3.4" stroke="#555" stroke-width="0.9"/></svg>
<svg class="a" style="left:69.20px;top:136.07px" width="9" height="8" viewBox="0 0 9 8"><path d="M0 0.5h3.5l1 1h4.5v6.5h-9z" fill="#d9b271"/><rect x="0" y="2" width="9" height="6" fill="#dcb67a"/></svg>
<div class="t" style="left:82.30px;top:137.52px;font-size:8.2px;color:#1e1e1e;transform:scaleX(0.9390);-webkit-text-stroke:0.13px #1e1e1e;">External Tables</div>
<svg class="a" style="left:57.40px;top:149.47px" width="7" height="7" viewBox="0 0 7 7"><rect x="0.5" y="0.5" width="6" height="6" stroke="#b4b4b4" stroke-width="1" fill="#fafafa"/><path d="M1.8 3.5h3.4" stroke="#555" stroke-width="0.9"/><path d="M3.5 1.8v3.4" stroke="#555" stroke-width="0.9"/></svg>
<svg class="a" style="left:69.20px;top:148.17px" width="9" height="8" viewBox="0 0 9 8"><path d="M0 0.5h3.5l1 1h4.5v6.5h-9z" fill="#d9b271"/><rect x="0" y="2" width="9" height="6" fill="#dcb67a"/></svg>
<div class="t" style="left:82.30px;top:149.63px;font-size:8.2px;color:#1e1e1e;transform:scaleX(0.9390);-webkit-text-stroke:0.13px #1e1e1e;">Graph Tables</div>
<svg class="a" style="left:57.40px;top:161.58px" width="7" height="7" viewBox="0 0 7 7"><rect x="0.5" y="0.5" width="6" height="6" stroke="#b4b4b4" stroke-width="1" fill="#fafafa"/><path d="M1.8 3.5h3.4" stroke="#555" stroke-width="0.9"/><path d="M3.5 1.8v3.4" stroke="#555" stroke-width="0.9"/></svg>
<svg class="a" style="left:69.20px;top:160.58px" width="9" height="9" viewBox="0 0 9 9"><rect x="0.5" y="0.5" width="8" height="8" fill="#fff" stroke="#3c3c3c" stroke-width="1"/><rect x="0.5" y="0.5" width="8" height="2" fill="#3c3c3c"/><path d="M0.5 4.5h8M0.5 6.5h8M3.2 2v7M5.8 2v7" stroke="#3c3c3c" stroke-width="0.8"/></svg>
<div class="t" style="left:82.30px;top:161.74px;font-size:8.2px;color:#1e1e1e;transform:scaleX(0.8902);-webkit-text-stroke:0.13px #1e1e1e;">dbo.BACKGRADEATTRIBUTE</div>
<svg class="a" style="left:57.40px;top:173.68px" width="7" height="7" viewBox="0 0 7 7"><rect x="0.5" y="0.5" width="6" height="6" stroke="#b4b4b4" stroke-width="1" fill="#fafafa"/><path d="M1.8 3.5h3.4" stroke="#555" stroke-width="0.9"/><path d="M3.5 1.8v3.4" stroke="#555" stroke-width="0.9"/></svg>
<svg class="a" style="left:69.20px;top:172.68px" width="9" height="9" viewBox="0 0 9 9"><rect x="0.5" y="0.5" width="8" height="8" fill="#fff" stroke="#3c3c3c" stroke-width="1"/><rect x="0.5" y="0.5" width="8" height="2" fill="#3c3c3c"/><path d="M0.5 4.5h8M0.5 6.5h8M3.2 2v7M5.8 2v7" stroke="#3c3c3c" stroke-width="0.8"/></svg>
<div class="t" style="left:82.30px;top:173.84px;font-size:8.2px;color:#1e1e1e;transform:scaleX(0.8902);-webkit-text-stroke:0.13px #1e1e1e;">dbo.FACEGRADEATTRIBUTE</div>
<svg class="a" style="left:57.40px;top:185.79px" width="7" height="7" viewBox="0 0 7 7"><rect x="0.5" y="0.5" width="6" height="6" stroke="#b4b4b4" stroke-width="1" fill="#fafafa"/><path d="M1.8 3.5h3.4" stroke="#555" stroke-width="0.9"/><path d="M3.5 1.8v3.4" stroke="#555" stroke-width="0.9"/></svg>
<svg class="a" style="left:69.20px;top:184.79px" width="9" height="9" viewBox="0 0 9 9"><rect x="0.5" y="0.5" width="8" height="8" fill="#fff" stroke="#3c3c3c" stroke-width="1"/><rect x="0.5" y="0.5" width="8" height="2" fill="#3c3c3c"/><path d="M0.5 4.5h8M0.5 6.5h8M3.2 2v7M5.8 2v7" stroke="#3c3c3c" stroke-width="0.8"/></svg>
<div class="t" style="left:82.30px;top:185.95px;font-size:8.2px;color:#1e1e1e;transform:scaleX(0.8902);-webkit-text-stroke:0.13px #1e1e1e;">dbo.GEOTECH</div>
<svg class="a" style="left:57.40px;top:197.90px" width="7" height="7" viewBox="0 0 7 7"><rect x="0.5" y="0.5" width="6" height="6" stroke="#b4b4b4" stroke-width="1" fill="#fafafa"/><path d="M1.8 3.5h3.4" stroke="#555" stroke-width="0.9"/><path d="M3.5 1.8v3.4" stroke="#555" stroke-width="0.9"/></svg>
<svg class="a" style="left:69.20px;top:196.90px" width="9" height="9" viewBox="0 0 9 9"><rect x="0.5" y="0.5" width="8" height="8" fill="#fff" stroke="#3c3c3c" stroke-width="1"/><rect x="0.5" y="0.5" width="8" height="2" fill="#3c3c3c"/><path d="M0.5 4.5h8M0.5 6.5h8M3.2 2v7M5.8 2v7" stroke="#3c3c3c" stroke-width="0.8"/></svg>
<div class="t" style="left:82.30px;top:198.05px;font-size:8.2px;color:#1e1e1e;transform:scaleX(0.8902);-webkit-text-stroke:0.13px #1e1e1e;">dbo.LAYER</div>
<svg class="a" style="left:57.40px;top:210.00px" width="7" height="7" viewBox="0 0 7 7"><rect x="0.5" y="0.5" width="6" height="6" stroke="#b4b4b4" stroke-width="1" fill="#fafafa"/><path d="M1.8 3.5h3.4" stroke="#555" stroke-width="0.9"/><path d="M3.5 1.8v3.4" stroke="#555" stroke-width="0.9"/></svg>
<svg class="a" style="left:69.20px;top:209.00px" width="9" height="9" viewBox="0 0 9 9"><rect x="0.5" y="0.5" width="8" height="8" fill="#fff" stroke="#3c3c3c" stroke-width="1"/><rect x="0.5" y="0.5" width="8" height="2" fill="#3c3c3c"/><path d="M0.5 4.5h8M0.5 6.5h8M3.2 2v7M5.8 2v7" stroke="#3c3c3c" stroke-width="0.8"/></svg>
<div class="t" style="left:82.30px;top:210.16px;font-size:8.2px;color:#1e1e1e;transform:scaleX(0.8902);-webkit-text-stroke:0.13px #1e1e1e;">dbo.OBJECT</div>
<svg class="a" style="left:57.40px;top:222.11px" width="7" height="7" viewBox="0 0 7 7"><rect x="0.5" y="0.5" width="6" height="6" stroke="#b4b4b4" stroke-width="1" fill="#fafafa"/><path d="M1.8 3.5h3.4" stroke="#555" stroke-width="0.9"/><path d="M3.5 1.8v3.4" stroke="#555" stroke-width="0.9"/></svg>
<svg class="a" style="left:69.20px;top:221.11px" width="9" height="9" viewBox="0 0 9 9"><rect x="0.5" y="0.5" width="8" height="8" fill="#fff" stroke="#3c3c3c" stroke-width="1"/><rect x="0.5" y="0.5" width="8" height="2" fill="#3c3c3c"/><path d="M0.5 4.5h8M0.5 6.5h8M3.2 2v7M5.8 2v7" stroke="#3c3c3c" stroke-width="0.8"/></svg>
<div class="t" style="left:82.30px;top:222.27px;font-size:8.2px;color:#1e1e1e;transform:scaleX(0.8902);-webkit-text-stroke:0.13px #1e1e1e;">dbo.POINT</div>
<svg class="a" style="left:57.40px;top:234.21px" width="7" height="7" viewBox="0 0 7 7"><rect x="0.5" y="0.5" width="6" height="6" stroke="#b4b4b4" stroke-width="1" fill="#fafafa"/><path d="M1.8 3.5h3.4" stroke="#555" stroke-width="0.9"/><path d="M3.5 1.8v3.4" stroke="#555" stroke-width="0.9"/></svg>
<svg class="a" style="left:69.20px;top:233.21px" width="9" height="9" viewBox="0 0 9 9"><rect x="0.5" y="0.5" width="8" height="8" fill="#fff" stroke="#3c3c3c" stroke-width="1"/><rect x="0.5" y="0.5" width="8" height="2" fill="#3c3c3c"/><path d="M0.5 4.5h8M0.5 6.5h8M3.2 2v7M5.8 2v7" stroke="#3c3c3c" stroke-width="0.8"/></svg>
<div class="t" style="left:82.30px;top:234.37px;font-size:8.2px;color:#1e1e1e;transform:scaleX(0.8902);-webkit-text-stroke:0.13px #1e1e1e;">dbo.RMCDISCONTINUITYSET</div>
<svg class="a" style="left:57.40px;top:246.32px" width="7" height="7" viewBox="0 0 7 7"><rect x="0.5" y="0.5" width="6" height="6" stroke="#b4b4b4" stroke-width="1" fill="#fafafa"/><path d="M1.8 3.5h3.4" stroke="#555" stroke-width="0.9"/><path d="M3.5 1.8v3.4" stroke="#555" stroke-width="0.9"/></svg>
<svg class="a" style="left:69.20px;top:245.32px" width="9" height="9" viewBox="0 0 9 9"><rect x="0.5" y="0.5" width="8" height="8" fill="#fff" stroke="#3c3c3c" stroke-width="1"/><rect x="0.5" y="0.5" width="8" height="2" fill="#3c3c3c"/><path d="M0.5 4.5h8M0.5 6.5h8M3.2 2v7M5.8 2v7" stroke="#3c3c3c" stroke-width="0.8"/></svg>
<div class="t" style="left:82.30px;top:246.48px;font-size:8.2px;color:#1e1e1e;transform:scaleX(0.8902);-webkit-text-stroke:0.13px #1e1e1e;">dbo.ROCKMASSCLASSIFICATION</div>
<svg class="a" style="left:57.40px;top:258.43px" width="7" height="7" viewBox="0 0 7 7"><rect x="0.5" y="0.5" width="6" height="6" stroke="#b4b4b4" stroke-width="1" fill="#fafafa"/><path d="M1.8 3.5h3.4" stroke="#555" stroke-width="0.9"/><path d="M3.5 1.8v3.4" stroke="#555" stroke-width="0.9"/></svg>
<svg class="a" style="left:69.20px;top:257.43px" width="9" height="9" viewBox="0 0 9 9"><rect x="0.5" y="0.5" width="8" height="8" fill="#fff" stroke="#3c3c3c" stroke-width="1"/><rect x="0.5" y="0.5" width="8" height="2" fill="#3c3c3c"/><path d="M0.5 4.5h8M0.5 6.5h8M3.2 2v7M5.8 2v7" stroke="#3c3c3c" stroke-width="0.8"/></svg>
<div class="t" style="left:82.30px;top:258.58px;font-size:8.2px;color:#1e1e1e;transform:scaleX(0.8902);-webkit-text-stroke:0.13px #1e1e1e;">dbo.SECTIONATTRIBUTE</div>
<svg class="a" style="left:57.40px;top:270.53px" width="7" height="7" viewBox="0 0 7 7"><rect x="0.5" y="0.5" width="6" height="6" stroke="#b4b4b4" stroke-width="1" fill="#fafafa"/><path d="M1.8 3.5h3.4" stroke="#555" stroke-width="0.9"/><path d="M3.5 1.8v3.4" stroke="#555" stroke-width="0.9"/></svg>
<svg class="a" style="left:69.20px;top:269.53px" width="9" height="9" viewBox="0 0 9 9"><rect x="0.5" y="0.5" width="8" height="8" fill="#fff" stroke="#3c3c3c" stroke-width="1"/><rect x="0.5" y="0.5" width="8" height="2" fill="#3c3c3c"/><path d="M0.5 4.5h8M0.5 6.5h8M3.2 2v7M5.8 2v7" stroke="#3c3c3c" stroke-width="0.8"/></svg>
<div class="t" style="left:82.30px;top:270.69px;font-size:8.2px;color:#1e1e1e;transform:scaleX(0.8902);-webkit-text-stroke:0.13px #1e1e1e;">dbo.WALLGRADEATTRIBUTE</div>
<svg class="a" style="left:44.60px;top:282.64px" width="7" height="7" viewBox="0 0 7 7"><rect x="0.5" y="0.5" width="6" height="6" stroke="#b4b4b4" stroke-width="1" fill="#fafafa"/><path d="M1.8 3.5h3.4" stroke="#555" stroke-width="0.9"/><path d="M3.5 1.8v3.4" stroke="#555" stroke-width="0.9"/></svg>
<svg class="a" style="left:56.40px;top:281.34px" width="9" height="8" viewBox="0 0 9 8"><path d="M0 0.5h3.5l1 1h4.5v6.5h-9z" fill="#d9b271"/><rect x="0" y="2" width="9" height="6" fill="#dcb67a"/></svg>
<div class="t" style="left:69.50px;top:282.80px;font-size:8.2px;color:#1e1e1e;transform:scaleX(0.9390);-webkit-text-stroke:0.13px #1e1e1e;">Views</div>
<svg class="a" style="left:44.60px;top:294.74px" width="7" height="7" viewBox="0 0 7 7"><rect x="0.5" y="0.5" width="6" height="6" stroke="#b4b4b4" stroke-width="1" fill="#fafafa"/><path d="M1.8 3.5h3.4" stroke="#555" stroke-width="0.9"/><path d="M3.5 1.8v3.4" stroke="#555" stroke-width="0.9"/></svg>
<svg class="a" style="left:56.40px;top:293.44px" width="9" height="8" viewBox="0 0 9 8"><path d="M0 0.5h3.5l1 1h4.5v6.5h-9z" fill="#d9b271"/><rect x="0" y="2" width="9" height="6" fill="#dcb67a"/></svg>
<div class="t" style="left:69.50px;top:294.90px;font-size:8.2px;color:#1e1e1e;transform:scaleX(0.9390);-webkit-text-stroke:0.13px #1e1e1e;">External Resources</div>
<svg class="a" style="left:44.60px;top:306.85px" width="7" height="7" viewBox="0 0 7 7"><rect x="0.5" y="0.5" width="6" height="6" stroke="#b4b4b4" stroke-width="1" fill="#fafafa"/><path d="M1.8 3.5h3.4" stroke="#555" stroke-width="0.9"/><path d="M3.5 1.8v3.4" stroke="#555" stroke-width="0.9"/></svg>
<svg class="a" style="left:56.40px;top:305.55px" width="9" height="8" viewBox="0 0 9 8"><path d="M0 0.5h3.5l1 1h4.5v6.5h-9z" fill="#d9b271"/><rect x="0" y="2" width="9" height="6" fill="#dcb67a"/></svg>
<div class="t" style="left:69.50px;top:307.01px;font-size:8.2px;color:#1e1e1e;transform:scaleX(0.9390);-webkit-text-stroke:0.13px #1e1e1e;">Synonyms</div>
<svg class="a" style="left:44.60px;top:318.96px" width="7" height="7" viewBox="0 0 7 7"><rect x="0.5" y="0.5" width="6" height="6" stroke="#b4b4b4" stroke-width="1" fill="#fafafa"/><path d="M1.8 3.5h3.4" stroke="#555" stroke-width="0.9"/><path d="M3.5 1.8v3.4" stroke="#555" stroke-width="0.9"/></svg>
<svg class="a" style="left:56.40px;top:317.66px" width="9" height="8" viewBox="0 0 9 8"><path d="M0 0.5h3.5l1 1h4.5v6.5h-9z" fill="#d9b271"/><rect x="0" y="2" width="9" height="6" fill="#dcb67a"/></svg>
<div class="t" style="left:69.50px;top:319.11px;font-size:8.2px;color:#1e1e1e;transform:scaleX(0.9390);-webkit-text-stroke:0.13px #1e1e1e;">Programmability</div>
<svg class="a" style="left:44.60px;top:331.06px" width="7" height="7" viewBox="0 0 7 7"><rect x="0.5" y="0.5" width="6" height="6" stroke="#b4b4b4" stroke-width="1" fill="#fafafa"/><path d="M1.8 3.5h3.4" stroke="#555" stroke-width="0.9"/><path d="M3.5 1.8v3.4" stroke="#555" stroke-width="0.9"/></svg>
<svg class="a" style="left:56.40px;top:329.76px" width="9" height="8" viewBox="0 0 9 8"><path d="M0 0.5h3.5l1 1h4.5v6.5h-9z" fill="#d9b271"/><rect x="0" y="2" width="9" height="6" fill="#dcb67a"/></svg>
<div class="t" style="left:69.50px;top:331.22px;font-size:8.2px;color:#1e1e1e;transform:scaleX(0.9390);-webkit-text-stroke:0.13px #1e1e1e;">Service Broker</div>
<svg class="a" style="left:44.60px;top:343.17px" width="7" height="7" viewBox="0 0 7 7"><rect x="0.5" y="0.5" width="6" height="6" stroke="#b4b4b4" stroke-width="1" fill="#fafafa"/><path d="M1.8 3.5h3.4" stroke="#555" stroke-width="0.9"/><path d="M3.5 1.8v3.4" stroke="#555" stroke-width="0.9"/></svg>
<svg class="a" style="left:56.40px;top:341.87px" width="9" height="8" viewBox="0 0 9 8"><path d="M0 0.5h3.5l1 1h4.5v6.5h-9z" fill="#d9b271"/><rect x="0" y="2" width="9" height="6" fill="#dcb67a"/></svg>
<div class="t" style="left:69.50px;top:343.33px;font-size:8.2px;color:#1e1e1e;transform:scaleX(0.9390);-webkit-text-stroke:0.13px #1e1e1e;">Storage</div>
<svg class="a" style="left:44.60px;top:355.27px" width="7" height="7" viewBox="0 0 7 7"><rect x="0.5" y="0.5" width="6" height="6" stroke="#b4b4b4" stroke-width="1" fill="#fafafa"/><path d="M1.8 3.5h3.4" stroke="#555" stroke-width="0.9"/><path d="M3.5 1.8v3.4" stroke="#555" stroke-width="0.9"/></svg>
<svg class="a" style="left:56.40px;top:353.97px" width="9" height="8" viewBox="0 0 9 8"><path d="M0 0.5h3.5l1 1h4.5v6.5h-9z" fill="#d9b271"/><rect x="0" y="2" width="9" height="6" fill="#dcb67a"/></svg>
<div class="t" style="left:69.50px;top:355.43px;font-size:8.2px;color:#1e1e1e;transform:scaleX(0.9390);-webkit-text-stroke:0.13px #1e1e1e;">Security</div>
<svg class="a" style="left:19.00px;top:367.38px" width="7" height="7" viewBox="0 0 7 7"><rect x="0.5" y="0.5" width="6" height="6" stroke="#b4b4b4" stroke-width="1" fill="#fafafa"/><path d="M1.8 3.5h3.4" stroke="#555" stroke-width="0.9"/><path d="M3.5 1.8v3.4" stroke="#555" stroke-width="0.9"/></svg>
<svg class="a" style="left:30.80px;top:366.08px" width="9" height="8" viewBox="0 0 9 8"><path d="M0 0.5h3.5l1 1h4.5v6.5h-9z" fill="#d9b271"/><rect x="0" y="2" width="9" height="6" fill="#dcb67a"/></svg>
<div class="t" style="left:43.90px;top:367.54px;font-size:8.2px;color:#1e1e1e;transform:scaleX(0.9390);-webkit-text-stroke:0.13px #1e1e1e;">Security</div>
<svg class="a" style="left:19.00px;top:379.49px" width="7" height="7" viewBox="0 0 7 7"><rect x="0.5" y="0.5" width="6" height="6" stroke="#b4b4b4" stroke-width="1" fill="#fafafa"/><path d="M1.8 3.5h3.4" stroke="#555" stroke-width="0.9"/><path d="M3.5 1.8v3.4" stroke="#555" stroke-width="0.9"/></svg>
<svg class="a" style="left:30.80px;top:378.19px" width="9" height="8" viewBox="0 0 9 8"><path d="M0 0.5h3.5l1 1h4.5v6.5h-9z" fill="#d9b271"/><rect x="0" y="2" width="9" height="6" fill="#dcb67a"/></svg>
<div class="t" style="left:43.90px;top:379.64px;font-size:8.2px;color:#1e1e1e;transform:scaleX(0.9390);-webkit-text-stroke:0.13px #1e1e1e;">Server Objects</div>
<svg class="a" style="left:19.00px;top:391.59px" width="7" height="7" viewBox="0 0 7 7"><rect x="0.5" y="0.5" width="6" height="6" stroke="#b4b4b4" stroke-width="1" fill="#fafafa"/><path d="M1.8 3.5h3.4" stroke="#555" stroke-width="0.9"/><path d="M3.5 1.8v3.4" stroke="#555" stroke-width="0.9"/></svg>
<svg class="a" style="left:30.80px;top:390.29px" width="9" height="8" viewBox="0 0 9 8"><path d="M0 0.5h3.5l1 1h4.5v6.5h-9z" fill="#d9b271"/><rect x="0" y="2" width="9" height="6" fill="#dcb67a"/></svg>
<div class="t" style="left:43.90px;top:391.75px;font-size:8.2px;color:#1e1e1e;transform:scaleX(0.9390);-webkit-text-stroke:0.13px #1e1e1e;">Replication</div>
<svg class="a" style="left:19.00px;top:403.70px" width="7" height="7" viewBox="0 0 7 7"><rect x="0.5" y="0.5" width="6" height="6" stroke="#b4b4b4" stroke-width="1" fill="#fafafa"/><path d="M1.8 3.5h3.4" stroke="#555" stroke-width="0.9"/><path d="M3.5 1.8v3.4" stroke="#555" stroke-width="0.9"/></svg>
<svg class="a" style="left:30.80px;top:402.40px" width="9" height="8" viewBox="0 0 9 8"><path d="M0 0.5h3.5l1 1h4.5v6.5h-9z" fill="#d9b271"/><rect x="0" y="2" width="9" height="6" fill="#dcb67a"/></svg>
<div class="t" style="left:43.90px;top:403.86px;font-size:8.2px;color:#1e1e1e;transform:scaleX(0.9390);-webkit-text-stroke:0.13px #1e1e1e;">PolyBase</div>
<svg class="a" style="left:19.00px;top:415.80px" width="7" height="7" viewBox="0 0 7 7"><rect x="0.5" y="0.5" width="6" height="6" stroke="#b4b4b4" stroke-width="1" fill="#fafafa"/><path d="M1.8 3.5h3.4" stroke="#555" stroke-width="0.9"/><path d="M3.5 1.8v3.4" stroke="#555" stroke-width="0.9"/></svg>
<svg class="a" style="left:30.80px;top:414.50px" width="9" height="8" viewBox="0 0 9 8"><path d="M0 0.5h3.5l1 1h4.5v6.5h-9z" fill="#d9b271"/><rect x="0" y="2" width="9" height="6" fill="#dcb67a"/></svg>
<div class="t" style="left:43.90px;top:415.96px;font-size:8.2px;color:#1e1e1e;transform:scaleX(0.9390);-webkit-text-stroke:0.13px #1e1e1e;">Management</div>
<svg class="a" style="left:19.00px;top:427.91px" width="7" height="7" viewBox="0 0 7 7"><rect x="0.5" y="0.5" width="6" height="6" stroke="#b4b4b4" stroke-width="1" fill="#fafafa"/><path d="M1.8 3.5h3.4" stroke="#555" stroke-width="0.9"/><path d="M3.5 1.8v3.4" stroke="#555" stroke-width="0.9"/></svg>
<svg class="a" style="left:31.30px;top:426.91px" width="8" height="9" viewBox="0 0 8 9"><rect x="0.5" y="0.5" width="7" height="8" fill="#fff" stroke="#333" stroke-width="1"/><path d="M4.8 2.5l-1.8 1.8 1.8 1.8" stroke="#333" stroke-width="0.9" fill="none"/></svg>
<div class="t" style="left:43.90px;top:428.07px;font-size:8.2px;color:#1e1e1e;transform:scaleX(0.9390);-webkit-text-stroke:0.13px #1e1e1e;">XEvent Profiler</div>
<div class="a" style="left:26.30px;top:49.50px;width:115.5px;height:23.7px;background:linear-gradient(90deg,#f3f3f3,#dcdcdc 22%,#e2e2e2 55%,#ececec 85%,#f6f6f6);filter:blur(1.2px)"></div>
</div>
<div class="a" style="left:280px;top:73.6px;width:173px;height:13.1px;background:#4b5d80"></div>
<div class="t" style="left:283.00px;top:77.56px;font-size:8.2px;color:#eef1f6;transform:scaleX(0.9671);">FaceMapping.sql -...U\daniel.owen (53))</div>
<svg class="a" style="left:433px;top:78px" width="4" height="5" viewBox="0 0 4 5"><path d="M0.5 0v3.5M0 3.5h4M3.5 0v3.5" stroke="#dfe3ec" stroke-width="0.9" fill="none"/></svg>
<div class="a" style="left:441px;top:75.3px;width:10px;height:9.7px;background:#fffbe4"></div>
<svg class="a" style="left:441px;top:75.3px" width="10" height="10" viewBox="0 0 10 10"><path d="M2 2l6 6M8 2l-6 6" stroke="#1e1e1e" stroke-width="1.3"/></svg>
<svg class="a" style="left:1278px;top:78px" width="6" height="4" viewBox="0 0 6 4"><path d="M0 0h6l-3 4z" fill="#d6dbe9"/></svg>
<div class="a" style="left:280px;top:87px;width:1006.6px;height:282px;background:#fff"></div>
<div class="a" style="left:280px;top:87px;width:12px;height:282px;background:#e6e7e8"></div>
<div class="a" style="left:306px;top:174px;width:967px;height:10px;border:1px solid #ebebeb"></div>
<div class="a" style="left:1273px;top:87px;width:13px;height:282px;background:#e8e8ec"></div>
<div class="a" style="left:1274px;top:88px;width:11px;height:10.5px;background:#f6f7fa;border:1px solid #d3d6de"></div>
<svg class="a" style="left:1276px;top:89px" width="8" height="9" viewBox="0 0 8 9"><path d="M4 0.5v8M0.5 4.5h7" stroke="#424242" stroke-width="1.4"/><path d="M2.5 2l1.5-1.5 1.5 1.5M2.5 7l1.5 1.5 1.5-1.5" stroke="#424242" stroke-width="0.8" fill="none"/></svg>
<svg class="a" style="left:1277px;top:103px" width="7" height="3.5" viewBox="0 0 7 3.5"><path d="M0 3.5l3.5-3.5 3.5 3.5z" fill="#868999"/></svg>
<div class="a" style="left:1276px;top:110.5px;width:8px;height:14px;background:#c2c3c9"></div>
<div class="a" style="left:1273px;top:119px;width:13px;height:1.5px;background:#00008b"></div>
<svg class="a" style="left:1277px;top:361px" width="7" height="3.5" viewBox="0 0 7 3.5"><path d="M0 0l3.5 3.5 3.5-3.5z" fill="#868999"/></svg>
<div class="a" style="left:280px;top:87px;width:993px;height:282px;overflow:hidden">
<div class="t mono" style="left:26px;top:12.69px;font-size:7.84px;-webkit-text-stroke:0.05px currentColor"><span style="color:#008000">/****** Object:  Table [dbo].[BACKGRADEATTRIBUTE]    Script Date: 24-Jan-2022 02:07:06 PM ******/</span></div>
<div class="t mono" style="left:26px;top:23.48px;font-size:7.84px;-webkit-text-stroke:0.05px currentColor"><span style="color:#0000ff">SET ANSI_NULLS ON</span></div>
<div class="t mono" style="left:26px;top:34.26px;font-size:7.84px;-webkit-text-stroke:0.05px currentColor"><span style="color:#0000ff">GO</span></div>
<div class="t mono" style="left:26px;top:45.05px;font-size:7.84px;-webkit-text-stroke:0.05px currentColor"><span style="color:#0000ff">SET QUOTED_IDENTIFIER ON</span></div>
<div class="t mono" style="left:26px;top:55.83px;font-size:7.84px;-webkit-text-stroke:0.05px currentColor"><span style="color:#0000ff">GO</span></div>
<div class="t mono" style="left:26px;top:66.62px;font-size:7.84px;-webkit-text-stroke:0.05px currentColor"><span style="color:#0000ff">CREATE TABLE </span><span style="color:#000000">[dbo]</span><span style="color:#808080">.</span><span style="color:#000000">[BACKGRADEATTRIBUTE]</span><span style="color:#808080">(</span></div>
<div class="t mono" style="left:26px;top:77.41px;font-size:7.84px;-webkit-text-stroke:0.05px currentColor"><span style="color:#000000">    </span><span style="color:#000000">[layer_fk]</span><span style="color:#000000"> </span><span style="color:#000000">[int]</span><span style="color:#808080"> NOT NULL,</span></div>
<div class="t mono" style="left:26px;top:88.19px;font-size:7.84px;-webkit-text-stroke:0.05px currentColor"><span style="color:#000000">    </span><span style="color:#000000">[object_fk]</span><span style="color:#000000"> </span><span style="color:#000000">[int]</span><span style="color:#808080"> NOT NULL,</span></div>
<div class="t mono" style="left:26px;top:98.98px;font-size:7.84px;-webkit-text-stroke:0.05px currentColor"><span style="color:#000000">    </span><span style="color:#000000">[Drive]</span><span style="color:#000000"> </span><span style="color:#000000">[nvarchar]</span><span style="color:#808080">(</span><span style="color:#000000">50</span><span style="color:#808080">)</span><span style="color:#808080"> NOT NULL,</span></div>
<div class="t mono" style="left:26px;top:109.76px;font-size:7.84px;-webkit-text-stroke:0.05px currentColor"><span style="color:#000000">    </span><span style="color:#000000">[Geologist]</span><span style="color:#000000"> </span><span style="color:#000000">[nvarchar]</span><span style="color:#808080">(</span><span style="color:#000000">80</span><span style="color:#808080">)</span><span style="color:#808080"> NOT NULL,</span></div>
<div class="t mono" style="left:26px;top:120.55px;font-size:7.84px;-webkit-text-stroke:0.05px currentColor"><span style="color:#000000">    </span><span style="color:#000000">[Date]</span><span style="color:#000000"> </span><span style="color:#000000">[nvarchar]</span><span style="color:#808080">(</span><span style="color:#000000">20</span><span style="color:#808080">)</span><span style="color:#808080"> NOT NULL,</span></div>
<div class="t mono" style="left:26px;top:131.34px;font-size:7.84px;-webkit-text-stroke:0.05px currentColor"><span style="color:#000000">    </span><span style="color:#000000">[Station]</span><span style="color:#000000"> </span><span style="color:#000000">[nvarchar]</span><span style="color:#808080">(</span><span style="color:#000000">50</span><span style="color:#808080">)</span><span style="color:#808080"> NOT NULL,</span></div>
<div class="t mono" style="left:26px;top:142.12px;font-size:7.84px;-webkit-text-stroke:0.05px currentColor"><span style="color:#000000">    </span><span style="color:#000000">[BackNumber]</span><span style="color:#000000"> </span><span style="color:#000000">[nvarchar]</span><span style="color:#808080">(</span><span style="color:#000000">10</span><span style="color:#808080">)</span><span style="color:#808080"> NOT NULL,</span></div>
<div class="t mono" style="left:26px;top:152.91px;font-size:7.84px;-webkit-text-stroke:0.05px currentColor"><span style="color:#000000">    </span><span style="color:#000000">[Lithology]</span><span style="color:#000000"> </span><span style="color:#000000">[nvarchar]</span><span style="color:#808080">(</span><span style="color:#000000">50</span><span style="color:#808080">)</span><span style="color:#808080"> NULL,</span></div>
<div class="t mono" style="left:26px;top:163.69px;font-size:7.84px;-webkit-text-stroke:0.05px currentColor"><span style="color:#000000">    </span><span style="color:#000000">[Area]</span><span style="color:#000000"> </span><span style="color:#000000">[decimal]</span><span style="color:#808080">(</span><span style="color:#000000">10</span><span style="color:#808080">, </span><span style="color:#000000">3</span><span style="color:#808080">)</span><span style="color:#808080"> NOT NULL,</span></div>
<div class="t mono" style="left:26px;top:174.48px;font-size:7.84px;-webkit-text-stroke:0.05px currentColor"><span style="color:#000000">    </span><span style="color:#000000">[Comments]</span><span style="color:#000000"> </span><span style="color:#000000">[nvarchar]</span><span style="color:#808080">(</span><span style="color:#000000">1000</span><span style="color:#808080">)</span><span style="color:#808080"> NULL</span></div>
<div class="t mono" style="left:26px;top:185.27px;font-size:7.84px;-webkit-text-stroke:0.05px currentColor"><span style="color:#808080">)</span><span style="color:#0000ff"> ON </span><span style="color:#000000">[PRIMARY]</span></div>
<div class="t mono" style="left:26px;top:196.05px;font-size:7.84px;-webkit-text-stroke:0.05px currentColor"><span style="color:#0000ff">GO</span></div>
<div class="t mono" style="left:26px;top:206.84px;font-size:7.84px;-webkit-text-stroke:0.05px currentColor"><span style="color:#008000">/****** Object:  Table [dbo].[FACEGRADEATTRIBUTE]    Script Date: 24-Jan-2022 02:07:06 PM ******/</span></div>
<div class="t mono" style="left:26px;top:217.62px;font-size:7.84px;-webkit-text-stroke:0.05px currentColor"><span style="color:#0000ff">SET ANSI_NULLS ON</span></div>
<div class="t mono" style="left:26px;top:228.41px;font-size:7.84px;-webkit-text-stroke:0.05px currentColor"><span style="color:#0000ff">GO</span></div>
<div class="t mono" style="left:26px;top:239.20px;font-size:7.84px;-webkit-text-stroke:0.05px currentColor"><span style="color:#0000ff">SET QUOTED_IDENTIFIER ON</span></div>
<div class="t mono" style="left:26px;top:249.98px;font-size:7.84px;-webkit-text-stroke:0.05px currentColor"><span style="color:#0000ff">GO</span></div>
<div class="t mono" style="left:26px;top:260.77px;font-size:7.84px;-webkit-text-stroke:0.05px currentColor"><span style="color:#0000ff">CREATE TABLE </span><span style="color:#000000">[dbo]</span><span style="color:#808080">.</span><span style="color:#000000">[FACEGRADEATTRIBUTE]</span><span style="color:#808080">(</span></div>
<div class="t mono" style="left:26px;top:271.55px;font-size:7.84px;-webkit-text-stroke:0.05px currentColor"><span style="color:#000000">    </span><span style="color:#000000">[layer_fk]</span><span style="color:#000000"> </span><span style="color:#000000">[int]</span><span style="color:#808080"> NOT NULL,</span></div>
<svg class="a" style="left:18px;top:66.63px" width="7" height="7" viewBox="0 0 7 7"><rect x="0.5" y="0.5" width="6" height="6" fill="#fff" stroke="#a5a5a5"/><path d="M1.8 3.5h3.4" stroke="#424242"/></svg>
<div class="a" style="left:22px;top:73.63px;width:1px;height:119.65px;background:#a5a5a5"></div>
<div class="a" style="left:22px;top:193.28px;width:4px;height:1px;background:#a5a5a5"></div>
<svg class="a" style="left:18px;top:260.78px" width="7" height="7" viewBox="0 0 7 7"><rect x="0.5" y="0.5" width="6" height="6" fill="#fff" stroke="#a5a5a5"/><path d="M1.8 3.5h3.4" stroke="#424242"/></svg>
<div class="a" style="left:22px;top:267.78px;width:1px;height:76.50px;background:#a5a5a5"></div>
</div>
<div class="a" style="left:280px;top:369px;width:1006.6px;height:12px;background:#e8e8ec"></div>
<div class="a" style="left:280px;top:369.5px;width:41px;height:11px;background:#fff;border:1px solid #cccedb"></div>
<div class="t" style="left:282.00px;top:372.06px;font-size:8.2px;color:#1e1e1e;transform:scaleX(0.9146);-webkit-text-stroke:0.13px #1e1e1e;">100 %</div>
<svg class="a" style="left:315px;top:374.5px" width="4" height="2.5" viewBox="0 0 4 2.5"><path d="M0 0h4l-2 2.5z" fill="#1e1e1e"/></svg>
<svg class="a" style="left:325px;top:372px" width="3" height="6" viewBox="0 0 3 6"><path d="M3 0v6l-3-3z" fill="#c8cad2"/></svg>
<svg class="a" style="left:1267px;top:372px" width="3" height="6" viewBox="0 0 3 6"><path d="M0 0v6l3-3z" fill="#c8cad2"/></svg>
<div class="a" style="left:280px;top:381px;width:1006.6px;height:16.5px;background:#eeeef2"></div>
<div class="a" style="left:280px;top:384px;width:57px;height:13.5px;background:#f6f6f6"></div>
<svg class="a" style="left:286px;top:385px" width="11" height="10" viewBox="0 0 11 10"><rect x="0.5" y="3.5" width="5" height="6" fill="#fff" stroke="#505050" stroke-width="0.9"/><rect x="5.5" y="0.5" width="4.5" height="7" fill="#505050"/><rect x="6.5" y="1.5" width="2.5" height="2" fill="#c8c8c8"/></svg>
<div class="t" style="left:301.00px;top:388.06px;font-size:8.2px;color:#1e1e1e;transform:scaleX(0.9366);-webkit-text-stroke:0.13px #1e1e1e;">Messages</div>
<div class="a" style="left:280px;top:397.5px;width:993px;height:246.5px;background:#fff"></div>
<div class="a" style="left:1273px;top:397.5px;width:13px;height:246.5px;background:#e8e8ec"></div>
<svg class="a" style="left:1275px;top:404px" width="7" height="3.5" viewBox="0 0 7 3.5"><path d="M0 3.5l3.5-3.5 3.5 3.5z" fill="#868999"/></svg>
<div class="a" style="left:1275px;top:410px;width:7px;height:195px;background:#c2c3c9"></div>
<svg class="a" style="left:1275px;top:637px" width="7" height="3.5" viewBox="0 0 7 3.5"><path d="M0 0l3.5 3.5 3.5-3.5z" fill="#868999"/></svg>
<div class="t mono" style="left:297.70px;top:399.70px;font-size:7.83px;color:#222;">Commands completed successfully.</div>
<div class="t mono" style="left:297.70px;top:421.32px;font-size:7.8px;color:#222;">Completion time: 2022-01-24T16:16:13.1757270+08:00</div>
<div class="a" style="left:280px;top:644px;width:1006.6px;height:12px;background:#e8e8ec"></div>
<div class="a" style="left:283px;top:643.5px;width:40px;height:12.5px;background:#fff;border:1px solid #cccedb"></div>
<div class="t" style="left:285.00px;top:647.06px;font-size:8.2px;color:#1e1e1e;transform:scaleX(0.9146);-webkit-text-stroke:0.13px #1e1e1e;">100 %</div>
<svg class="a" style="left:316.5px;top:649.5px" width="4" height="2.5" viewBox="0 0 4 2.5"><path d="M0 0h4l-2 2.5z" fill="#1e1e1e"/></svg>
<svg class="a" style="left:328px;top:647px" width="3" height="6" viewBox="0 0 3 6"><path d="M3 0v6l-3-3z" fill="#c8cad2"/></svg>
<svg class="a" style="left:1267px;top:647px" width="3" height="6" viewBox="0 0 3 6"><path d="M0 0v6l3-3z" fill="#c8cad2"/></svg>
<div class="a" style="left:280px;top:656px;width:1006.6px;height:3px;background:#f3f3f3"></div>
<div class="a" style="left:280px;top:659px;width:1006.6px;height:15px;background:#f0e68c"></div>
<svg class="a" style="left:283px;top:662px" width="10" height="10" viewBox="0 0 10 10"><circle cx="5" cy="5" r="4.8" fill="#2e9b3a"/><path d="M2.6 5.2l1.7 1.9 3.2-4" stroke="#fff" stroke-width="1.3" fill="none"/></svg>
<div class="t" style="left:296.00px;top:663.56px;font-size:8.2px;color:#1e1e1e;transform:scaleX(0.9524);-webkit-text-stroke:0.13px #1e1e1e;">Query executed successfully.</div>
<div class="a" style="left:926px;top:661px;width:1px;height:11px;background:#fbf7dc"></div>
<div class="a" style="left:1046px;top:661px;width:1px;height:11px;background:#fbf7dc"></div>
<div class="a" style="left:1153px;top:661px;width:1px;height:11px;background:#fbf7dc"></div>
<div class="a" style="left:1210px;top:661px;width:1px;height:11px;background:#fbf7dc"></div>
<div class="a" style="left:1248px;top:661px;width:1px;height:11px;background:#fbf7dc"></div>
<div class="t" style="left:930.00px;top:663.56px;font-size:8.2px;color:#1e1e1e;transform:scaleX(0.8756);-webkit-text-stroke:0.13px #1e1e1e;">MPL71\SQLEXPRESS (15.0 RTM)</div>
<div class="t" style="left:1050.00px;top:663.56px;font-size:8.2px;color:#1e1e1e;transform:scaleX(0.9561);-webkit-text-stroke:0.13px #1e1e1e;">MAPTEK-AU\daniel.owen ...</div>
<div class="t" style="left:1157.60px;top:663.56px;font-size:8.2px;color:#1e1e1e;transform:scaleX(0.9646);-webkit-text-stroke:0.13px #1e1e1e;">FaceMapping</div>
<div class="t" style="left:1214.50px;top:663.56px;font-size:8.2px;color:#1e1e1e;transform:scaleX(0.8927);-webkit-text-stroke:0.13px #1e1e1e;">00:00:00</div>
<div class="t" style="left:1251.50px;top:663.56px;font-size:8.2px;color:#1e1e1e;transform:scaleX(0.9402);-webkit-text-stroke:0.13px #1e1e1e;">0 rows</div>
<div class="a" style="left:430.2px;top:70.3px;width:33.2px;height:21.2px;border:2.5px solid #e5403b"></div>
<div class="a" style="left:447.5px;top:91px;width:62px;height:16.5px;background:#f2f2f2;border:1px solid #a8abb3"></div>
<div class="t" style="left:451.00px;top:96.56px;font-size:8.2px;color:#575757;transform:scaleX(0.9585);-webkit-text-stroke:0.1px #575757;">Close (Ctrl+F4)</div>
<svg class="a" style="left:446px;top:77px" width="9" height="14" viewBox="0 0 9 14"><path d="M0.5 0.5v11l2.5-2.5 2 4 1.5-0.8-2-3.8h3.5z" fill="#fff" stroke="#000" stroke-width="0.9"/></svg>
<div class="a" style="left:0px;top:677px;width:1291px;height:17px;background:#007acc"></div>
<svg class="a" style="left:3px;top:683px" width="11" height="9" viewBox="0 0 11 9"><path d="M3 0.5h7.5l-2 7.5h-8z" stroke="#fff" stroke-width="1.1" fill="none"/></svg>
<div class="t" style="left:18.70px;top:683.56px;font-size:8.2px;color:#fff;transform:scaleX(0.8902);-webkit-text-stroke:0.1px #fff;">Ready</div></body></html>
